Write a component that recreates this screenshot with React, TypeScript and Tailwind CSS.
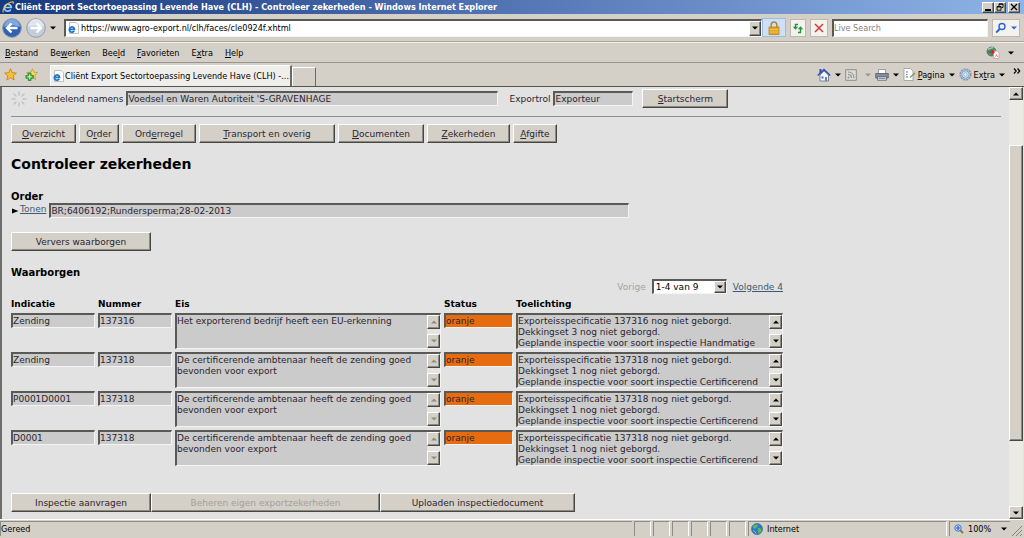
import React from "react";
import clsx from "clsx";

type Guarantee = {
  indicatie: string;
  nummer: string;
  eis: string;
  status: string;
  toelichting: string;
};

const menuItems = ["&Bestand", "Be&werken", "Bee&ld", "&Favorieten", "E&xtra", "&Help"];

const navItems = [
  { label: "&Overzicht", width: "w-[65px]" },
  { label: "O&rder", width: "w-10" },
  { label: "Ord&erregel", width: "w-[74px]" },
  { label: "&Transport en overig", width: "w-[136px]" },
  { label: "&Documenten", width: "w-[86px]" },
  { label: "&Zekerheden", width: "w-[83px]" },
  { label: "&Afgifte", width: "w-[44px]" },
];

const certExplanation =
  "Exporteisspecificatie 137318 nog niet geborgd.\nDekkingset 1 nog niet geborgd.\nGeplande inspectie voor soort inspectie Certificerend";
const certRequirement =
  "De certificerende ambtenaar heeft de zending goed\nbevonden voor export";

const guarantees: Guarantee[] = [
  {
    indicatie: "Zending",
    nummer: "137316",
    eis: "Het exporterend bedrijf heeft een EU-erkenning",
    status: "oranje",
    toelichting:
      "Exporteisspecificatie 137316 nog niet geborgd.\nDekkingset 3 nog niet geborgd.\nGeplande inspectie voor soort inspectie Handmatige",
  },
  {
    indicatie: "Zending",
    nummer: "137318",
    eis: certRequirement,
    status: "oranje",
    toelichting: certExplanation,
  },
  {
    indicatie: "P0001D0001",
    nummer: "137318",
    eis: certRequirement,
    status: "oranje",
    toelichting: certExplanation,
  },
  {
    indicatie: "D0001",
    nummer: "137318",
    eis: certRequirement,
    status: "oranje",
    toelichting: certExplanation,
  },
];

const raised =
  "border border-t-white border-l-white border-r-[#474743] border-b-[#474743] bg-[#d4d0c8] shadow-[inset_-1px_-1px_0_#8a8881]";
const sunken =
  "border-t-2 border-l-2 border-r border-b border-t-[#595955] border-l-[#595955] border-r-[#f4f4f4] border-b-[#f4f4f4]";

// "&" marks the letter that is underlined as access key
const Accel = ({ text }: { text: string }) => {
  const at = text.indexOf("&");
  if (at < 0) return <>{text}</>;
  return (
    <span>
      {text.slice(0, at)}
      <u>{text[at + 1]}</u>
      {text.slice(at + 2)}
    </span>
  );
};

const Triangle = ({ up, className = "text-black" }: { up?: boolean; className?: string }) => (
  <svg viewBox="0 0 6 4" className={clsx("h-1 w-1.5 shrink-0", className)} fill="currentColor">
    <path d={up ? "M0 3.5 3 .5l3 3z" : "M0 .5h6l-3 3z"} />
  </svg>
);

const IeLogo = ({ page }: { page?: boolean }) => (
  <svg viewBox="0 0 12 12" className="size-3 shrink-0" fill="none">
    {page && <path d="M2.500.5H9l2.500 2.500v8.500h-9z" fill="#fff" stroke="#a8a8a0" strokeWidth=".7" />}
    <path
      d={page ? "M7.200 8.800A2.600 2.600 0 1 1 7.500 7.300H2.500" : "M8.800 8.500A3.500 3.500 0 1 1 9.300 6.500H3"}
      stroke={page ? "#1f74c8" : "#8fd0ff"}
      strokeWidth="1.700"
    />
    {!page && <path d="M1.500 11.300C-.5 9.500 4.500 1.500 10.800.8c.8.300.6 1.200.2 2" stroke="#f0c040" strokeWidth="1.100" />}
  </svg>
);

const FormButton = ({
  label,
  className,
  disabled,
}: {
  label: string;
  className?: string;
  disabled?: boolean;
}) => (
  <button
    type="button"
    disabled={disabled}
    className={clsx(
      raised,
      "block h-[19px] whitespace-nowrap text-center",
      disabled && "text-[#a3a19b]",
      className
    )}
  >
    <Accel text={label} />
  </button>
);

const ReadOnlyField = ({
  id,
  value,
  label,
  className,
}: {
  id?: string;
  value: string;
  label?: string;
  className?: string;
}) => (
  <input
    id={id}
    readOnly
    value={value}
    aria-label={label}
    className={clsx(sunken, "block h-[15px] min-w-0 outline-none", className)}
  />
);

const ScrollField = ({
  value,
  label,
  inactive,
}: {
  value: string;
  label: string;
  inactive?: boolean;
}) => {
  const arrow = inactive ? "text-[#8e8c86]" : "text-black";
  return (
    <div className={clsx(sunken, "flex h-9 bg-[#cbcbcb]")}>
      <textarea
        readOnly
        aria-label={label}
        value={value}
        className="block min-w-0 flex-1 resize-none overflow-hidden whitespace-pre pt-px leading-[11px] outline-none"
      />
      <div className="flex w-[13px] flex-col justify-between bg-[#e6e4e0]">
        <button
          type="button"
          aria-label="Omhoog"
          disabled={inactive}
          className={clsx(raised, "flex h-[14px] items-center justify-center")}
        >
          <Triangle up className={arrow} />
        </button>
        <button
          type="button"
          aria-label="Omlaag"
          disabled={inactive}
          className={clsx(raised, "flex h-[14px] items-center justify-center")}
        >
          <Triangle className={arrow} />
        </button>
      </div>
    </div>
  );
};

const TitleBar = () => (
  <header className="flex h-[14px] items-center gap-px bg-linear-to-r from-[#17397f] via-[#5475b4] to-[#8fb4e8] pl-0.5 pr-1 text-white">
    <IeLogo />
    <h1 className="flex-1 truncate font-bold">
      Cliënt Export Sectortoepassing Levende Have (CLH) - Controleer zekerheden - Windows Internet Explorer
    </h1>
    <div className="flex">
      <button
        type="button"
        aria-label="Minimaliseren"
        className={clsx(raised, "flex h-[11px] w-3 items-end justify-center pb-px")}
      >
        <span className="h-0.5 w-1.5 bg-black" />
      </button>
      <button
        type="button"
        aria-label="Vorig formaat"
        className={clsx(raised, "mr-0.5 flex h-[11px] w-3 items-center justify-center")}
      >
        <svg viewBox="0 0 8 8" className="size-2" fill="none" stroke="#000" strokeWidth=".9">
          <path d="M3 3V.8h4v3.700H5.500M3 1.300h4M1 3.500h4v3.700H1zM1 4h4" />
        </svg>
      </button>
      <button
        type="button"
        aria-label="Sluiten"
        className={clsx(raised, "flex h-[11px] w-3 items-center justify-center")}
      >
        <svg viewBox="0 0 8 8" className="size-2" stroke="#000" strokeWidth="1.300">
          <path d="M1 1l6 6M7 1 1 7" />
        </svg>
      </button>
    </div>
  </header>
);

const AddressBar = () => (
  <div className="flex h-7 items-center gap-1 border-b border-[#aaa69c] pl-0.5 pr-1">
    <button type="button" aria-label="Terug">
      <svg viewBox="0 0 20 20" className="size-5">
        <circle cx="10" cy="10" r="9.300" fill="#2f62b4" stroke="#8895ab" />
        <path d="M2 9a8 8 0 0 1 16 0c-5-2-11-2-16 0z" fill="#7ea6df" />
        <path d="M15.500 10H5.500M9.500 5.500 5 10l4.500 4.500" stroke="#fff" strokeWidth="2.400" fill="none" />
      </svg>
    </button>
    <button type="button" aria-label="Vooruit">
      <svg viewBox="0 0 20 20" className="size-5">
        <circle cx="10" cy="10" r="9.300" fill="#c3cddb" stroke="#929bab" />
        <path d="M2 9a8 8 0 0 1 16 0c-5-2-11-2-16 0z" fill="#e1e7ef" />
        <path d="M4.500 10h10M10.500 5.500 15 10l-4.500 4.500" stroke="#fff" strokeWidth="2.400" fill="none" />
      </svg>
    </button>
    <button type="button" aria-label="Recente pagina's" className="pr-1">
      <Triangle />
    </button>
    <div className="flex min-w-0 flex-1 items-center">
      <div className={clsx(sunken, "flex h-[18px] min-w-0 flex-1 items-center gap-0.5 bg-white pl-px")}>
        <IeLogo page />
        <input
          aria-label="Adres"
          defaultValue="https://www.agro-export.nl/clh/faces/cle0924f.xhtml"
          className="min-w-0 flex-1 outline-none"
        />
        <button
          type="button"
          aria-label="Adressen tonen"
          className={clsx(raised, "flex h-[15px] w-3 items-center justify-center")}
        >
          <Triangle />
        </button>
      </div>
      <button
        type="button"
        aria-label="Beveiligingsrapport"
        className="flex h-[19px] w-6 items-center justify-center border border-[#9dbbe0] bg-[#cfe0f5]"
      >
        <svg viewBox="0 0 12 14" className="h-[14px] w-3">
          <path d="M3.200 7V3.800a2.800 2.800 0 0 1 5.600 0V7" fill="none" stroke="#a98a3c" strokeWidth="1.500" />
          <rect x="1" y="6" width="10" height="7.500" fill="#e5a524" stroke="#b27a12" strokeWidth=".7" />
          <path d="M1.500 8.500h9M1.500 11h9" stroke="#f4ca62" strokeWidth=".8" />
        </svg>
      </button>
    </div>
    <button
      type="button"
      aria-label="Vernieuwen"
      className="flex h-[18px] w-4 items-center justify-center border border-[#bdb9b0] bg-[#f3f2ef]"
    >
      <svg viewBox="0 0 12 12" className="size-3 shrink-0" fill="none">
        <path d="M6 2.500H3.500V6" stroke="#25933a" strokeWidth="1.400" />
        <path d="M.8 4.800h5.400L3.500 7.800z" fill="#25933a" />
        <path d="M6 10.500h2.500V7" stroke="#25933a" strokeWidth="1.400" />
        <path d="M5.800 7.200h5.400L8.500 4.200z" fill="#25933a" />
      </svg>
    </button>
    <button
      type="button"
      aria-label="Stoppen"
      className="flex h-[18px] w-[18px] items-center justify-center border border-[#bdb9b0] bg-[#f3f2ef]"
    >
      <svg viewBox="0 0 10 10" className="size-2.5" stroke="#cf3a3a" strokeWidth="1.500">
        <path d="M1 1l8 8M9 1 1 9" />
      </svg>
    </button>
    <input
      aria-label="Zoeken"
      placeholder="Live Search"
      className={clsx(sunken, "h-[18px] w-[156px] bg-white outline-none placeholder:text-[#85847f]")}
    />
    <button
      type="button"
      aria-label="Zoekopdracht starten"
      className="flex h-[18px] w-7 items-center justify-around border border-[#bdb9b0] bg-[#f3f2ef]"
    >
      <svg viewBox="0 0 12 12" className="size-3" fill="none" stroke="#2c62d6">
        <circle cx="7" cy="4.500" r="3" strokeWidth="1.400" />
        <path d="M4.800 6.800 1.200 10.600" strokeWidth="2" />
      </svg>
      <Triangle className="text-[#2c62d6]" />
    </button>
  </div>
);

const MenuBar = () => (
  <nav className="flex h-[21px] items-center border-t border-b border-t-[#f3efe4] border-b-[#96958f] pl-[5px] pr-1">
    <ul className="flex flex-1 gap-3">
      {menuItems.map((item) => (
        <li key={item}>
          <button type="button">
            <Accel text={item} />
          </button>
        </li>
      ))}
    </ul>
    <button type="button" aria-label="Omzetten naar PDF" className="flex items-center gap-2 pr-1.5">
      <svg viewBox="0 0 14 13" className="h-[13px] w-[14px]">
        <circle cx="5.500" cy="5.500" r="4.500" fill="#3f9a68" stroke="#3a6c8c" strokeWidth=".8" />
        <path d="M2 3.500c2-2 4-1.500 5-2" stroke="#a8d8c4" strokeWidth="1.200" fill="none" />
        <path d="M7.500 5h3.500l2 2v5.500H7.500z" fill="#fff" stroke="#d09090" strokeWidth=".7" />
        <path d="M2.500 6h5M5.500 4l2.500 2-2.500 2.200" stroke="#d22828" strokeWidth="1.500" fill="none" />
        <path d="M8.500 11.500c1.500-1 1.800-2 1.800-3 .3 1.500 1 2 2 2.200" stroke="#d94848" strokeWidth=".7" fill="none" />
      </svg>
      <Triangle />
    </button>
  </nav>
);

const TabBar = () => (
  <div className="flex h-6 items-end border-b border-[#55554f] pl-1">
    <div className="flex items-center gap-2 self-center">
      <button type="button" aria-label="Favorietencentrum">
        <svg viewBox="0 0 14 14" className="size-[13px]">
          <path
            d="M7 .8 8.800 5l4.500.4-3.400 3 1 4.500L7 10.500l-3.900 2.400 1-4.500-3.400-3L5.200 5z"
            fill="#fbc02f"
            stroke="#c87f14"
            strokeWidth=".9"
          />
        </svg>
      </button>
      <button type="button" aria-label="Aan Favorieten toevoegen">
        <svg viewBox="0 0 14 14" className="size-[13px]">
          <path
            d="M8 .8 9.500 4.500l4 .4-3 3 1 4.500L8 10.200l-3.900 2.200 1-4.500-3.400-3L6.200 4.500z"
            fill="#f7d766"
            stroke="#c89a34"
            strokeWidth=".9"
          />
          <path
            d="M3.500 5.500h3v2.500H9v3H6.500v2.500h-3V11H1V8h2.500z"
            fill="#4cb848"
            stroke="#257a28"
            strokeWidth=".8"
          />
          <path d="M5 7v5M2.500 9.500h5" stroke="#d5f3cf" />
        </svg>
      </button>
    </div>
    <div className="ml-3 flex h-[21px] items-center gap-px border-t border-l border-r-2 border-t-white border-l-white border-r-[#6b6a65] bg-[#efeeeb] px-px">
      <IeLogo page />
      <span className="whitespace-nowrap">Cliënt Export Sectortoepassing Levende Have (CLH) -...</span>
    </div>
    <button
      type="button"
      aria-label="Nieuw tabblad"
      className="h-[19px] w-6 border-t border-l border-r border-t-white border-l-white border-r-[#6b6a65]"
    />
    <div className="flex flex-1 items-center justify-end gap-1 self-center pr-[3px]">
      <button type="button" aria-label="Startpagina" className="flex items-center gap-1">
        <svg viewBox="0 0 14 14" className="size-[14px]">
          <path d="M3 7v6h8.500V7L7 3z" fill="#f4f6fa" stroke="#5a6c94" strokeWidth=".8" />
          <path d="M.8 7.500 7 1.500l6.200 6" fill="none" stroke="#3450a8" strokeWidth="1.600" />
          <path d="M2.500 1h2v3l-2 1.500z" fill="#3848b8" />
          <path d="M8 9h2v4H8z" fill="#6a7fae" />
          <path d="M4.500 8.500h2v2h-2z" fill="#4a66b8" />
        </svg>
        <Triangle />
      </button>
      <button type="button" aria-label="Feeds" disabled className="flex items-center gap-2">
        <svg viewBox="0 0 12 12" className="size-3" fill="none" stroke="#8f8d88">
          <path d="M.7.700h10.600v10.600H.7z" fill="#dedcd7" />
          <path d="M3 5.500c2 0 3.500 1.500 3.500 3.500M3 3c3.500 0 6 2.500 6 6" strokeWidth="1.200" />
          <circle cx="3.500" cy="8.500" r=".6" />
        </svg>
        <Triangle className="text-[#96948e]" />
      </button>
      <button type="button" aria-label="Afdrukken" className="flex items-center gap-1">
        <svg viewBox="0 0 14 12" className="h-3 w-[14px]">
          <path d="M3.500.5h7V5h-7z" fill="#fff" stroke="#7a8088" strokeWidth=".7" />
          <path d="M.7 4.500h12.600V9H.7z" fill="#888e98" stroke="#555b64" strokeWidth=".8" />
          <path d="M2.500 7.500h9v3.800h-9z" fill="#d8e0ea" stroke="#555b64" strokeWidth=".7" />
          <path d="M3.500 9.200h7" stroke="#4b70a8" />
        </svg>
        <Triangle />
      </button>
      <button type="button" className="flex items-center gap-0.5">
        <svg viewBox="0 0 13 13" className="size-[13px]">
          <path d="M1 .5h6.500L10 3v9.500H1z" fill="#fff" stroke="#999" strokeWidth=".8" />
          <path d="M3 4h2M3 6.500h1.500M3 9h2" stroke="#4d73b8" />
          <path d="M7 9.500 12 5" stroke="#7a9a58" strokeWidth="1.300" />
        </svg>
        <Accel text="&Pagina" />
        <Triangle className="ml-0.5 text-black" />
      </button>
      <button type="button" className="flex items-center gap-0.5">
        <svg viewBox="0 0 13 13" className="size-[13px]" fill="none">
          <circle cx="6.500" cy="6.500" r="5.300" stroke="#7e9cb8" strokeWidth="1.600" strokeDasharray="2.100 .7" />
          <circle cx="6.500" cy="6.500" r="3.800" fill="#c7dcee" stroke="#7fa3c6" />
          <circle cx="6.500" cy="6.500" r="1.700" fill="#e8f0f8" stroke="#8cacc8" strokeWidth=".7" />
        </svg>
        <Accel text="Ex&tra" />
        <Triangle className="ml-0.5 text-black" />
      </button>
      <button type="button" aria-label="Meer opdrachten" className="ml-1 self-start">
        <svg viewBox="0 0 8 6" className="h-1.5 w-2" fill="none" stroke="#000" strokeWidth="1.200">
          <path d="M1 .5 3.200 3 1 5.500M4.500.5 6.700 3 4.500 5.500" />
        </svg>
      </button>
    </div>
  </div>
);

const GuaranteeTable = () => (
  <table className="table-fixed border-collapse text-left">
    <colgroup>
      <col className="w-[87px]" />
      <col className="w-[77px]" />
      <col className="w-[269px]" />
      <col className="w-[72px]" />
      <col className="w-[267px]" />
    </colgroup>
    <thead>
      <tr className="h-[19px] align-middle text-black">
        <th>Indicatie</th>
        <th>Nummer</th>
        <th>Eis</th>
        <th>Status</th>
        <th>Toelichting</th>
      </tr>
    </thead>
    <tbody>
      {guarantees.map((row, index) => (
        <tr key={index} className="align-top">
          <td className="pr-[3px] pb-[3px]">
            <ReadOnlyField value={row.indicatie} label="Indicatie" className="w-full bg-[#cbcbcb]" />
          </td>
          <td className="pr-[3px]">
            <ReadOnlyField value={row.nummer} label="Nummer" className="w-full bg-[#cbcbcb]" />
          </td>
          <td className="pr-[3px] pb-[3px]">
            <ScrollField value={row.eis} label="Eis" inactive />
          </td>
          <td className="pr-[3px]">
            <ReadOnlyField value={row.status} label="Status" className="w-full bg-[#e66c0f]" />
          </td>
          <td>
            <ScrollField value={row.toelichting} label="Toelichting" />
          </td>
        </tr>
      ))}
    </tbody>
  </table>
);

const PageContent = () => (
  <main className="min-w-0 flex-1 pl-[9px] pr-2 pt-0.5 text-[9px] leading-3 text-[#2b2530] [font-family:'DejaVu_Sans',Verdana,sans-serif]">
    <div className="flex items-center border-b border-[#8e8e8c] pb-2">
      <svg
        viewBox="0 0 16 16"
        className="mr-[9px] size-4"
        stroke="#c2c2c2"
        strokeWidth="1.500"
        strokeLinecap="round"
      >
        <path d="M8 1v3M8 12v3M1 8h3M12 8h3M3 3l2 2M11 11l2 2M3 13l2-2M11 5l2-2" />
      </svg>
      <label htmlFor="namens" className="mr-[3px]">
        Handelend namens
      </label>
      <ReadOnlyField
        id="namens"
        value="Voedsel en Waren Autoriteit 'S-GRAVENHAGE"
        className="w-[372px] bg-[#cbcbcb]"
      />
      <label htmlFor="exportrol" className="ml-[11px] mr-[3px]">
        Exportrol
      </label>
      <ReadOnlyField id="exportrol" value="Exporteur" className="w-20 bg-[#cbcbcb]" />
      <FormButton label="&Startscherm" className="ml-[9px] w-[86px]" />
    </div>
    <nav className="mt-[7px] flex gap-[3px]">
      {navItems.map((item) => (
        <FormButton key={item.label} label={item.label} className={item.width} />
      ))}
    </nav>
    <h2 className="mt-[11px] text-[14px] leading-5 font-bold text-black">Controleer zekerheden</h2>
    <h3 className="mt-4 text-[10px] leading-[13px] font-bold text-black">Order</h3>
    <div className="flex items-center">
      <svg viewBox="0 0 8 8" className="mr-px size-2">
        <path d="M1 1.500 7.500 4 1 6.500z" fill="#000" />
      </svg>
      <a href="#tonen" className="mr-[3px] self-start text-[#3d5a70] underline">
        Tonen
      </a>
      <ReadOnlyField
        value="BR;6406192;Rundersperma;28-02-2013"
        label="Order"
        className="w-[580px] bg-[#cbcbcb]"
      />
    </div>
    <FormButton label="Ververs waarborgen" className="mt-[14px] w-[140px]" />
    <h3 className="mt-[15px] text-[10px] leading-[13px] font-bold text-black">Waarborgen</h3>
    <div className="w-[772px]">
      <div className="flex items-center justify-end">
        <span className="mr-1.5 text-[#a3a3a3]">Vorige</span>
        <div className={clsx(sunken, "relative mr-1.5 w-[75px] bg-white")}>
          <select
            aria-label="Bereik"
            className="block h-3 w-full appearance-none pl-0.5 leading-3 text-black outline-none"
          >
            <option>1-4 van 9</option>
          </select>
          <span
            className={clsx(
              raised,
              "pointer-events-none absolute inset-y-0 right-0 flex w-3 items-center justify-center"
            )}
          >
            <Triangle />
          </span>
        </div>
        <a href="#volgende" className="text-[#3d5a70] underline">
          Volgende 4
        </a>
      </div>
      <GuaranteeTable />
    </div>
    <div className="mt-6 mb-1.5 flex">
      <FormButton label="Inspectie aanvragen" className="w-[140px]" />
      <FormButton label="Beheren eigen exportzekerheden" disabled className="w-[229px]" />
      <FormButton label="Uploaden inspectiedocument" className="w-[195px]" />
    </div>
  </main>
);

const PageScrollbar = () => (
  <div className="mr-px flex w-[14px] flex-col bg-[#eceae5]">
    <button
      type="button"
      aria-label="Omhoog schuiven"
      className={clsx(raised, "flex h-[13px] items-center justify-center")}
    >
      <Triangle up />
    </button>
    <div className="grow-[45]" />
    <div className={clsx(raised, "grow-[294]")} />
    <div className="grow-[65]" />
    <button
      type="button"
      aria-label="Omlaag schuiven"
      className={clsx(raised, "flex h-[13px] items-center justify-center")}
    >
      <Triangle />
    </button>
  </div>
);

const StatusBar = () => (
  <footer className="flex h-[19px] items-stretch gap-0.5 border-t border-white pt-px pb-0.5 pr-0.5">
    <div className="flex flex-1 items-center border-t border-l border-[#8f8c85]">Gereed</div>
    {[0, 1, 2, 3, 4, 5].map((pane) => (
      <div key={pane} className="w-[17px] border-t border-l border-r border-[#8f8c85] border-r-white" />
    ))}
    <div className="flex w-[199px] items-center gap-1 border-t border-l border-r border-[#8f8c85] border-r-white pl-0.5">
      <svg viewBox="0 0 12 12" className="size-3">
        <circle cx="6" cy="6" r="5.500" fill="#2f79c4" stroke="#2a5c88" strokeWidth=".6" />
        <path
          d="M2 3c2-2 4-1.500 5-1 .5 1.500-1 2-2 3s-2 1-3 0zM7 5c2 0 3.500.5 3.500 2S9 10.500 8 10.500 6.500 7 7 5z"
          fill="#58b860"
        />
        <path d="M2.500 7.500c1 1 2 1.500 2.500 3" stroke="#9fd4ee" fill="none" />
      </svg>
      Internet
    </div>
    <button type="button" className="flex w-[61px] items-center gap-1 border-t border-l border-[#8f8c85] pl-1">
      <svg viewBox="0 0 10 10" className="size-2.5" fill="none">
        <path d="M5.500 5.500 9 9" stroke="#a06c3c" strokeWidth="1.800" />
        <circle cx="4" cy="4" r="3.200" fill="#bfdcfa" stroke="#3c78c8" />
        <path d="M4 2v4M2 4h4" stroke="#1f5cc0" strokeWidth="1.100" />
      </svg>
      100%
      <Triangle className="ml-1.5 text-black" />
    </button>
    <svg viewBox="0 0 10 12" className="h-3 w-2.5 self-end" stroke="#85827a">
      <path d="M0 12 10 2M4 12l6-6M8 12l2-2" />
    </svg>
  </footer>
);

const App = () => {
  return (
    <div className="flex min-h-screen flex-col bg-[#d4d0c8] text-[9px] leading-3 text-black [font-family:'DejaVu_Sans_Condensed','DejaVu_Sans',Tahoma,sans-serif]">
      <TitleBar />
      <AddressBar />
      <MenuBar />
      <TabBar />
      <div className="flex flex-1 border-l-2 border-l-[#6e6d69] bg-[#e2e2e2]">
        <PageContent />
        <PageScrollbar />
      </div>
      <StatusBar />
    </div>
  );
};

export default App;
